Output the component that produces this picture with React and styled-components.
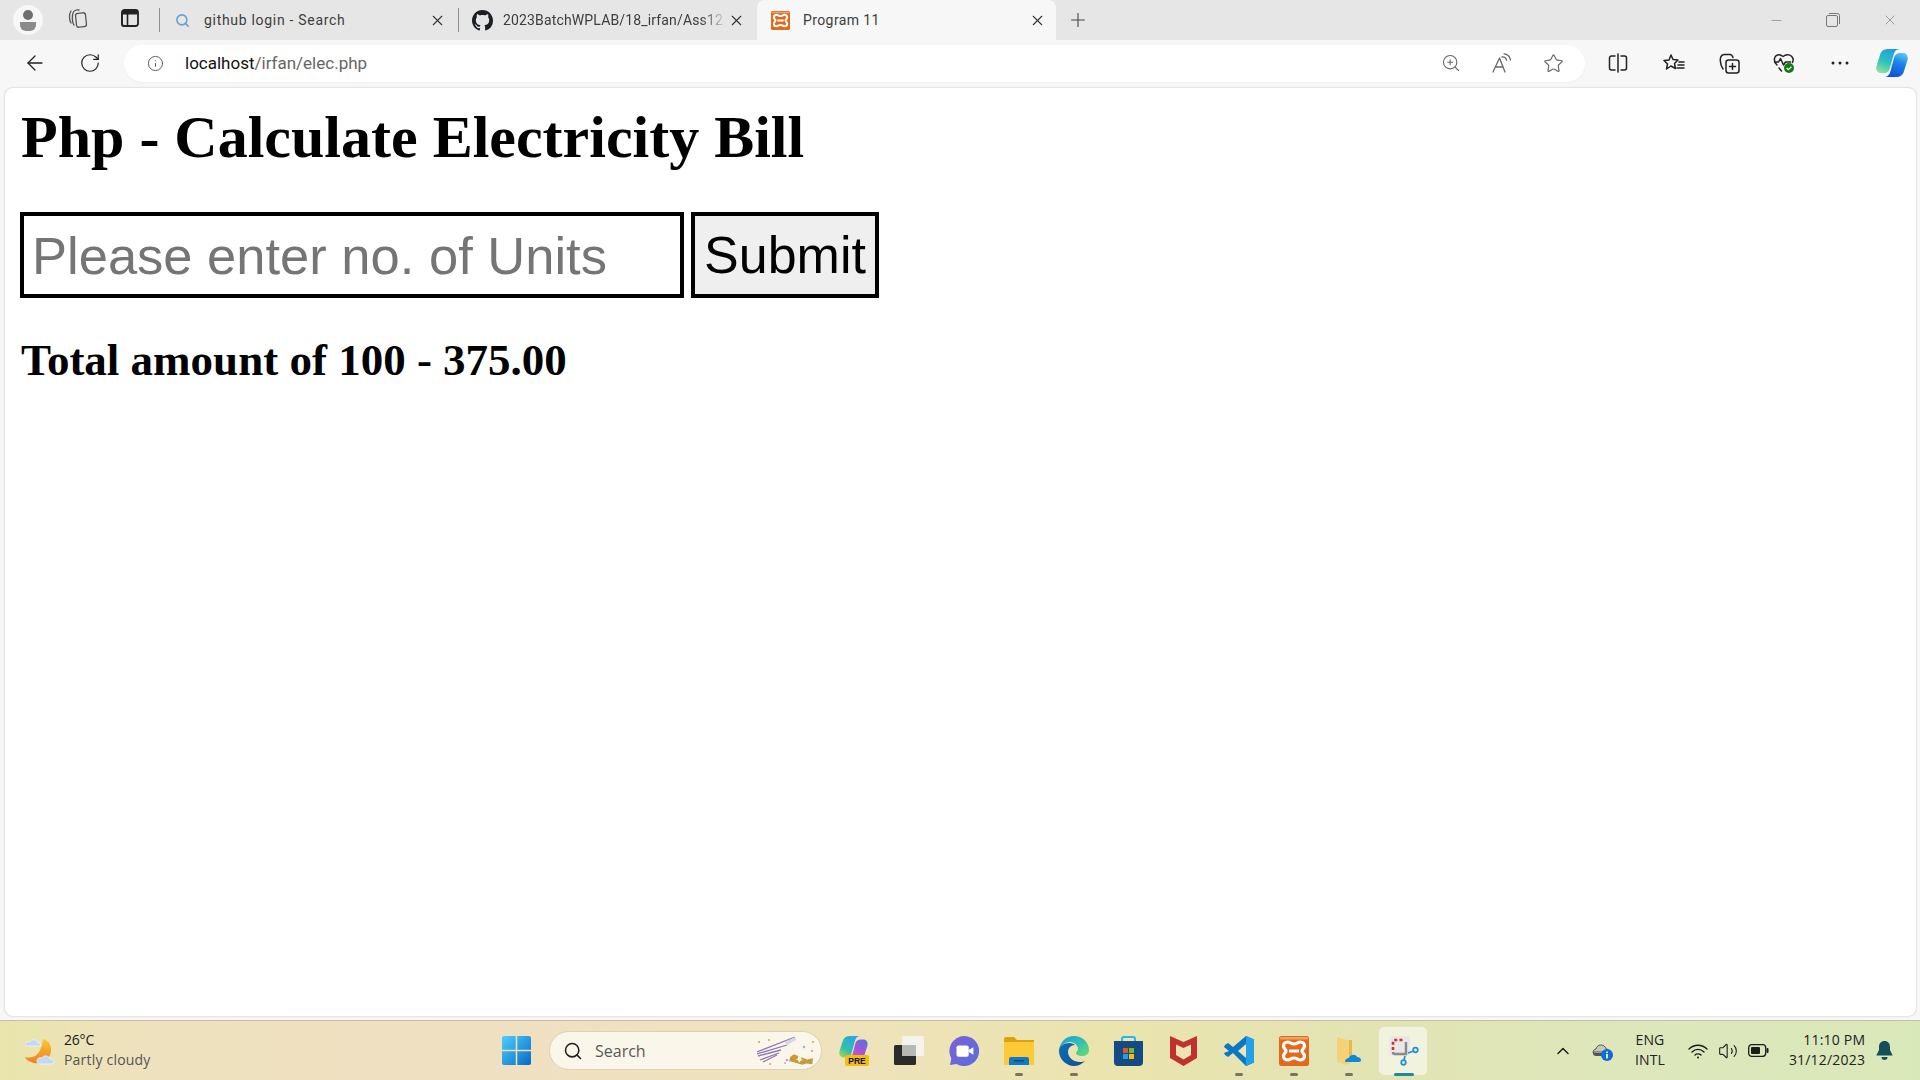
import React from "react";
import styled, { createGlobalStyle } from "styled-components";
import { ArrowLeft, RotateCw, Info, ZoomIn, Star, Plus, X, Minus, Search, ChevronUp, Volume2 } from "lucide-react";

const Global = createGlobalStyle`
  html, body { margin: 0; padding: 0; background: #fff; }
  * { box-sizing: border-box; }
`;
const Shell = styled.div`
  width: 1920px; height: 1080px; display: flex; flex-direction: column; overflow: hidden;
  background: #f7f7f7; font-family: "Open Sans", "Noto Sans", sans-serif; color: #1a1a1a;
`;
const TabStrip = styled.div`
  height: 40px; flex: none; display: flex; align-items: flex-start; background: #e6e6e6; position: relative; z-index: 1;
`;
const StripBtn = styled.div`
  flex: none; height: ${p => p.$h || 36}px; width: ${p => p.$w}px; display: flex; align-items: center; justify-content: center; color: #444;
`;
const Avatar = styled.div`
  width: 30px; height: 30px; border-radius: 50%; background: #f7f7f7; display: flex; align-items: center; justify-content: center;
  margin: 5px 0 0 13px; flex: none;
`;
const Sep = styled.div`
  flex: none; width: 1px; height: 24px; margin: 8px 0 0 ${p => p.$ml || 0}px; background: #8f8f8f;
`;
const Tab = styled.div`
  flex: none; height: ${p => (p.$active ? 44 : 40)}px; width: ${p => p.$w}px; display: flex; align-items: center;
  padding: ${p => (p.$active ? "0 10px 4px 12px" : "0 12px 0 0")}; font-size: 14px; font-family: Roboto, sans-serif; color: #3d3d3d;
  background: ${p => (p.$active ? "#f7f7f7" : "transparent")};
  border-radius: ${p => (p.$active ? "8px 8px 0 0" : "0")};
`;
const TabIcon = styled.div`
  flex: none; width: 22px; height: 22px; display: flex; align-items: center; justify-content: center; margin: 0 ${p => p.$gap}px 0 ${p => p.$left || 0}px;
`;
const TabTitle = styled.div`
  flex: 1; white-space: nowrap; overflow: hidden; letter-spacing: ${p => p.$sp || 0.15}px;
  ${p => p.$fade && "-webkit-mask-image: linear-gradient(90deg,#000 88%,transparent 100%);"}
`;
const WindowControls = styled.div`
  margin-left: auto; display: flex; height: 40px; align-items: center; color: #777; padding-right: 22px; gap: 42px;
`;
const Toolbar = styled.div`
  height: 48px; flex: none; display: flex; align-items: center; background: #f7f7f7; padding-bottom: 2px;
`;
const ToolBtn = styled.div`
  flex: none; width: ${p => p.$w}px; margin-left: ${p => p.$ml || 0}px; height: 40px; display: flex; align-items: center; justify-content: center; color: ${p => p.$c || "#222"};
`;
const Address = styled.div`
  flex: none; width: 1461px; height: 37px; margin-left: 20px; border-radius: 19px; background: #fff; display: flex; align-items: center;
  box-shadow: 0 1px 2px rgba(0,0,0,.04); padding-left: 23px;
`;
const Url = styled.div`
  margin-left: 21px; font: 17px Roboto, sans-serif; color: #111; white-space: nowrap; flex: 1;
  span { color: #666; }
`;
const AddrIcons = styled.div`
  display: flex; align-items: center; color: #666; gap: 31px; padding-right: 21px;
`;
const ToolRight = styled.div`
  display: flex; align-items: center; margin-left: 23px;
`;
const Page = styled.main`
  flex: 1; margin: 0 4px 4px 5px; background: #fff; border-radius: 8px; box-shadow: 0 0 2px rgba(0,0,0,.28);
  padding: 0 16px; color: #000; font-family: "Liberation Serif", serif; overflow: hidden; min-height: 0;
`;
const Title = styled.h1`
  margin: 14.500px 0 0; font-size: 60px; line-height: 69px; font-weight: bold; white-space: nowrap;
`;
const Form = styled.form`
  display: flex; margin: 40.500px 0 0 -1px; gap: 7px; align-items: stretch;
`;
const Units = styled.input`
  width: 664px; height: 86px; border: 4px solid #000; padding: 0 8px; font: 52.500px "Liberation Sans", sans-serif; background: #fff; outline: none;
  &::placeholder { color: #757575; opacity: 1; }
`;
const Submit = styled.button`
  width: 188px; height: 86px; border: 4px solid #000; padding: 0; font: 52px "Liberation Sans", sans-serif; background: #efefef; color: #000;
`;
const Total = styled.h3`
  margin: 36px 0 0; font-size: 45px; line-height: 53px; font-weight: bold; white-space: nowrap;
`;
const Taskbar = styled.footer`
  height: 60px; flex: none; display: flex; align-items: center; position: relative;
  border-top: 1px solid #c6bfa3;
  background: linear-gradient(90deg,#e9e5ab 0%,#eee2bd 6%,#efe0c2 25%,#eee3bb 45%,#ebe4ae 58%,#e2e4b4 72%,#dde7bb 85%,#d9e8b9 100%);
`;
const Weather = styled.div`
  flex: none; width: 489px; display: flex; align-items: center; padding-left: 25px; gap: 9px;
`;
const WeatherText = styled.div`
  font: 14px/20px "Open Sans", sans-serif; letter-spacing: -0.2px; color: #1b1b1b; margin-top: -2px;
  small { display: block; font-size: 14px; color: #555; letter-spacing: 0.2px; }
`;
const Slot = styled.div`
  flex: none; width: ${p => p.$w || 55}px; height: 48px; display: flex; align-items: center; justify-content: center; position: relative;
  ${p => p.$active && "&::before{content:'';position:absolute;left:3px;right:4px;top:0;bottom:0;background:rgba(255,255,255,.55);border-radius:5px;}"}
  svg { position: relative; }
`;
const Running = styled.span`
  position: absolute; bottom: -1px; left: 50%; margin-left: ${p => (p.$active ? -10 : -4)}px; width: ${p => (p.$active ? 20 : 8)}px; height: 3px; border-radius: 2px;
  background: ${p => (p.$active ? "#1f8a9e" : "#77745f")};
`;
const SearchPill = styled.div`
  flex: none; width: 273px; height: 39px; margin: 0 4px 0 5px; border-radius: 20px; background: #faf6ea; border: 1px solid #d9d2b5;
  display: flex; align-items: center; padding: 0 4px 0 13px; color: #555; font-size: 16px; position: relative;
`;
const SearchLabel = styled.span`
  margin-left: 12px; flex: 1; color: #585858; font-family: "Open Sans", sans-serif; font-size: 16px;
`;
const Tray = styled.div`
  flex: none; display: flex; align-items: center; margin-left: 122px; color: #1c1c1c;
`;
const TrayText = styled.div`
  flex: none; font: 14px/20px "Open Sans", sans-serif; letter-spacing: ${p => p.$sp || 0}px; text-align: ${p => p.$align || "center"};
  color: #222; white-space: nowrap; margin: -2px 0 0 ${p => p.$ml || 0}px;
`;
const TrayIcon = styled.div`
  flex: none; width: ${p => p.$w}px; display: flex; align-items: center; justify-content: center; margin-left: ${p => p.$ml || 0}px;
`;

const s = { fill: "none", stroke: "currentColor", strokeWidth: 1.3, strokeLinecap: "round", strokeLinejoin: "round" };
const Xampp = ({ size }) => (
  <svg width={size} height={size} viewBox="0 0 30 30">
    <rect width="30" height="30" rx="2.500" fill="#e2691d" />
    <rect x="1" y="1" width="28" height="2.500" rx="1" fill="#f0a263" />
    <path d="M9 6C11 6 12 8 15 8S19 6 21 6C24 6 25.500 8 25.500 10C25.500 12.500 23 13 23 15S25.500 17.500 25.500 20C25.500 22 24 24 21 24C19 24 18 22 15 22S11 24 9 24C6 24 4.500 22 4.500 20C4.500 17.500 7 17 7 15S4.500 12.500 4.500 10C4.500 8 6 6 9 6Z" fill="none" stroke="#fff" strokeWidth="3.200" />
    <path d="M10 15h10" stroke="#fff" strokeWidth="3" />
  </svg>
);
const GitHub = () => (
  <svg width="21" height="21" viewBox="0 0 16 16"><path fill="#1b1f23" d="M8 0C3.58 0 0 3.58 0 8c0 3.54 2.29 6.53 5.47 7.59.4.07.55-.17.55-.38 0-.19-.01-.82-.01-1.49-2.010.37-2.530-.49-2.690-.94-.09-.23-.48-.94-.82-1.130-.28-.15-.68-.52-.01-.53.63-.01 1.080.58 1.230.82.72 1.210 1.870.87 2.330.66.07-.52.28-.87.51-1.070-1.780-.2-3.640-.89-3.640-3.950 0-.87.31-1.590.82-2.150-.08-.2-.36-1.020.08-2.120 0 0 .67-.21 2.200.82.640-.18 1.320-.27 2-.27s1.360.09 2 .27c1.530-1.040 2.200-.82 2.200-.82.44 1.100.16 1.920.08 2.120.51.56.82 1.270.82 2.150 0 3.070-1.870 3.750-3.650 3.950.29.25.54.73.54 1.480 0 1.070-.01 1.930-.01 2.200 0 .21.15.46.55.38A8.010 8.010 0 0 0 16 8c0-4.420-3.580-8-8-8z" /></svg>
);
const Person = () => (
  <svg width="20" height="24" viewBox="0 0 20 24"><circle cx="10" cy="7" r="5" fill="#6f6f6f" /><path d="M2 14h16v3a6 6 0 0 1-6 6H8a6 6 0 0 1-6-6z" fill="#8a8a8a" /></svg>
);
const Workspaces = () => (
  <svg width="22" height="22" viewBox="0 0 22 22" {...s} stroke="#555"><rect x="9" y="6" width="10" height="14" rx="2.500" transform="rotate(-6 14 13)" /><path d="M7 18C5 16 5 9 6 6c.5-2 3-3.500 6-3" /><path d="M4 16C2 13 2 7 4 4" /></svg>
);
const VTabs = () => (
  <svg width="18" height="18" viewBox="0 0 18 18"><rect x="1" y="1" width="16" height="16" rx="2.500" fill="none" stroke="#222" strokeWidth="1.800" /><rect x="1" y="1" width="16" height="4.500" rx="1.500" fill="#222" /><rect x="1" y="3" width="5.500" height="14" rx="1" fill="none" stroke="#222" strokeWidth="1.600" /></svg>
);
const Restore = () => (
  <svg width="14" height="14" viewBox="0 0 14 14" fill="none" stroke="#777"><rect x=".5" y="2.500" width="11" height="11" rx="1.500" /><path d="M3 .5h8.500A2 2 0 0 1 13.500 2.500V11" /></svg>
);
const ReadAloud = () => (
  <svg width="20" height="20" viewBox="0 0 20 20" {...s}><path d="M1 19 7.500 5 13 19M3.500 14h7.500" /><path d="M10 4c2-.5 4 1 4.500 3M12 .8c3.500 0 6 3 6.500 6" /></svg>
);
const Split = () => (
  <svg width="20" height="20" viewBox="0 0 20 20" {...s} strokeWidth="1.500"><path d="M7 3H3.500A2 2 0 0 0 1.500 5v10a2 2 0 0 0 2 2H7M13 3h3.500a2 2 0 0 1 2 2v10a2 2 0 0 1-2 2H13M10 1v18" /></svg>
);
const Favs = () => (
  <svg width="22" height="20" viewBox="0 0 22 20" {...s} strokeWidth="1.500"><path d="M8 2l2 4.500 5 .5-3.500 3.500 1 5-4.500-2.500L3.500 16l1-5L1 7.500l5-.5z" /><path d="M16 9h5M15 12h6M14 15h7" /></svg>
);
const Collections = () => (
  <svg width="21" height="21" viewBox="0 0 21 21" {...s} strokeWidth="1.500"><rect x="7" y="7" width="13" height="13" rx="2.500" /><path d="M13.500 10.500v6M10.500 13.500h6" /><path d="M4 16C2 13 1 8 1.500 5c.5-2 2-3.500 4-3.500L11 1.500c1.500 0 2.500 1.500 3 3" /></svg>
);
const Health = () => (
  <svg width="22" height="22" viewBox="0 0 22 22"><path {...s} strokeWidth="1.500" d="M4 13C2 11 1 9 1.500 6.500 2 3.500 6 1 10 4.500 14 1 19 3 20 6.500c.3 1.500 0 3-.5 4M1.500 10h4l2-3.500 3 6.500 2-3h5M6 16l2.500 3" /><circle cx="16" cy="16" r="5" fill="#107c10" /><path d="M13.700 16l1.700 1.700 3-3" fill="none" stroke="#fff" strokeWidth="1.300" /></svg>
);
const Dots = () => (
  <svg width="18" height="4" viewBox="0 0 18 4" fill="#222"><circle cx="2" cy="2" r="1.500" /><circle cx="9" cy="2" r="1.500" /><circle cx="16" cy="2" r="1.500" /></svg>
);
const RIBBON = "M12 0H24C20.500 0 18.500 2 17.500 6L14 19C13.500 22 11 24 8 24H5C1.500 24-.5 21 .5 17L4 6C5 2 8 0 12 0Z";
const CopilotMark = () => (
  <svg width="32" height="28" viewBox="0 0 32 28">
    <defs>
      <linearGradient id="cpa" x1="0.6" y1="0" x2="0.2" y2="1"><stop offset="0" stopColor="#1f9fe4" /><stop offset=".55" stopColor="#2fc3bb" /><stop offset="1" stopColor="#8de39a" /></linearGradient>
      <linearGradient id="cpb" x1="0.6" y1="0" x2="0.2" y2="1"><stop offset="0" stopColor="#0f4fd6" /><stop offset=".6" stopColor="#1b86e8" /><stop offset="1" stopColor="#5fc8f4" /></linearGradient>
    </defs>
    <path d={RIBBON} fill="url(#cpa)" />
    <path d={RIBBON} fill="url(#cpb)" transform="rotate(180 16 14)" />
  </svg>
);
const CopilotPre = () => (
  <svg width="30" height="30" viewBox="0 0 30 30">
    <defs>
      <linearGradient id="pa" x1="0.7" y1="0" x2="0" y2="1"><stop offset="0" stopColor="#27a4ea" /><stop offset=".6" stopColor="#33c2a8" /><stop offset="1" stopColor="#b8d84c" /></linearGradient>
      <linearGradient id="pb" x1="1" y1="0" x2="0" y2="1"><stop offset="0" stopColor="#f06aa0" /><stop offset=".5" stopColor="#b050dc" /><stop offset="1" stopColor="#4a78e0" /></linearGradient>
    </defs>
    <g transform="scale(.9)">
      <path d={RIBBON} fill="url(#pa)" />
      <path d={RIBBON} fill="url(#pb)" transform="rotate(180 16 14)" />
    </g>
    <rect x="6" y="19" width="24" height="11" rx="2" fill="#f5bd0f" />
    <text x="18" y="28" fontSize="8.500" fontWeight="800" fontFamily="Liberation Sans, sans-serif" textAnchor="middle" fill="#111">PRE</text>
  </svg>
);
const WeatherIcon = () => (
  <svg width="30" height="29" viewBox="0 0 30 29">
    <defs><linearGradient id="moon" x1="0" y1="0" x2="0" y2="1"><stop offset="0" stopColor="#f9c93c" /><stop offset="1" stopColor="#ee7f18" /></linearGradient></defs>
    <path d="M18 3c7 2 10 9 7 16-3 8-13 10-19 7-3-1-5-3-6-5 8 2 16-1 18-18z" fill="url(#moon)" />
    <path d="M0 9c0-3 3-4 5-3 1-3 7-3 8 1 2 0 3 1 3 3H2C1 10 0 10 0 9z" fill="#c2d8f5" stroke="#eef4fc" strokeWidth=".8" />
    <path d="M12 25c0-3 3-4 5-3 1-3 7-3 8 1 3 0 4 1 4 3 0 1-1 2-3 2H15c-2 0-3-1-3-3z" fill="#c2d8f5" stroke="#eef4fc" strokeWidth=".8" />
  </svg>
);
const WinLogo = () => (
  <svg width="29" height="29" viewBox="0 0 29 29">
    <defs><linearGradient id="win" x1="0" y1="0" x2="1" y2="1"><stop offset="0" stopColor="#4fd0fb" /><stop offset="1" stopColor="#0669c6" /></linearGradient></defs>
    <path d="M2 0h11.700v13.700H0V2a2 2 0 0 1 2-2zM15.300 0H27a2 2 0 0 1 2 2v11.700H15.300zM0 15.300h13.700V29H2a2 2 0 0 1-2-2zM15.300 15.300H29V27a2 2 0 0 1-2 2H15.300z" fill="url(#win)" />
  </svg>
);
const Cracker = () => (
  <svg width="60" height="30" viewBox="0 0 60 30">
    <path d="M0 16 38 1M0 18 30 9M1 20 24 14M3 24 22 17M6 26 20 19" stroke="#8d7ab8" strokeWidth="1.300" fill="none" />
    <path d="M28 6 38 1l1 3-9 5z" fill="#d9d3e6" />
    <path d="M33 21l4-3 13 6 6-1-1 6-6-1-4 1-12-4-1 1z" fill="#c89a3e" transform="rotate(-3 40 22)" />
    <path d="M41 19l2 2 2-1-1 3 2 1-3 1-1 2-1-3-2 0 2-2z" fill="#fff6dd" />
    <g fill="#b9a5d8"><circle cx="30" cy="24" r="1.300" /><circle cx="28" cy="27" r="1" /><circle cx="47" cy="11" r="1.300" /></g>
    <g fill="#d8a945"><circle cx="2" cy="6" r="1.100" /><circle cx="12" cy="4" r="1.100" /><circle cx="56" cy="6" r="1.100" /><circle cx="55" cy="15" r="1.100" /><circle cx="13" cy="28" r="1.100" /></g>
  </svg>
);
const TaskView = () => (
  <svg width="30" height="30" viewBox="0 0 30 30">
    <rect x="0" y="9" width="22" height="20" rx="1.500" fill="#2b2b2b" />
    <rect x="8" y="0" width="22" height="20" rx="1.500" fill="#f4f4f0" opacity=".92" />
    <rect x="8" y="9" width="14" height="11" fill="#b9b9b4" />
  </svg>
);
const Chat = () => (
  <svg width="30" height="32" viewBox="0 0 32 32">
    <defs><linearGradient id="chat" x1="0" y1="0" x2="1" y2="1"><stop offset="0" stopColor="#7b5fd8" /><stop offset="1" stopColor="#5b6fd8" /></linearGradient></defs>
    <path d="M16 0a16 16 0 1 1-8 29.800L1 31l1.500-7A16 16 0 0 1 16 0z" fill="url(#chat)" />
    <rect x="8" y="10" width="13" height="12" rx="2" fill="#fff" /><path d="M21 15l5-3v8l-5-3z" fill="#fff" />
  </svg>
);
const Folder = () => (
  <svg width="30" height="28" viewBox="0 0 30 28">
    <path d="M0 2a2 2 0 0 1 2-2h8l3 3h17v5H0z" fill="#dfa10e" />
    <path d="M0 5h30v23H0z" fill="#fcc937" />
    <path d="M5 28v-6a2 2 0 0 1 2-2h16a2 2 0 0 1 2 2v6z" fill="#0f78c9" />
    <rect x="10" y="23" width="10" height="1.400" fill="#07456f" />
  </svg>
);
const Edge = () => (
  <svg width="30" height="30" viewBox="0 0 30 30">
    <defs>
      <linearGradient id="e1" x1="0" y1="0" x2="1" y2="1"><stop offset="0" stopColor="#1b9de2" /><stop offset=".55" stopColor="#35c1b0" /><stop offset="1" stopColor="#6be06a" /></linearGradient>
      <linearGradient id="e2" x1="0" y1="0" x2="1" y2="1"><stop offset="0" stopColor="#0d6fb8" /><stop offset="1" stopColor="#124e94" /></linearGradient>
    </defs>
    <path d="M15 0c8 0 15 6 15 14 0 4-3 6-7 6-3 0-6-1-6-3 0-1 2-2 2-4 0-4-4-7-8-7-5 0-9 3-11 8C1 6 7 0 15 0z" fill="url(#e1)" />
    <path d="M0 15c0-5 5-8 10-8 3 0 5 1 6 2-4 0-7 3-7 7 0 6 6 10 12 10 2 0 4-.5 5-1-3 3-7 5-11 5C7 30 0 23 0 15z" fill="url(#e2)" />
  </svg>
);
const Store = () => (
  <svg width="29" height="30" viewBox="0 0 29 30">
    <path d="M8 6V3a2 2 0 0 1 2-2h9a2 2 0 0 1 2 2v3" fill="none" stroke="#27b4ef" strokeWidth="2" />
    <path d="M0 5h29v21a4 4 0 0 1-4 4H4a4 4 0 0 1-4-4z" fill="#164a82" />
    <rect x="9" y="12" width="5" height="5" fill="#e8502a" /><rect x="15" y="12" width="5" height="5" fill="#7fb81f" />
    <rect x="9" y="18" width="5" height="5" fill="#18a3e8" /><rect x="15" y="18" width="5" height="5" fill="#fdb813" />
  </svg>
);
const McAfee = () => (
  <svg width="27" height="30" viewBox="0 0 27 30">
    <path d="M0 0l13.500 6L27 0v22l-13.500 8L0 22z" fill="#c1322f" />
    <path d="M6 8.500l7.500 3.500L21 8.500V19l-7.500 4.500L6 19z" fill="#efe3b4" />
  </svg>
);
const VSCode = () => (
  <svg width="30" height="30" viewBox="0 0 30 30">
    <path d="M22 0l8 3.500v23L22 30 9 17l-5 4-3-2-1-2 5-2-5-4 1-2 3-2 5 4z" fill="#0a78c3" />
    <path d="M22 0l8 3.500v23L22 30z" fill="#22a0ea" />
    <path d="M22 8l-8 7 8 7z" fill="#efe4b2" />
  </svg>
);
const OneDriveFolder = () => (
  <svg width="24" height="28" viewBox="0 0 24 28">
    <path d="M0 0l10 3h5v22l-5 3-10-3z" fill="#f5d27a" /><path d="M12 3h3v22h-3z" fill="#e8b94a" />
    <path d="M8 25c0-3 2-4 4-4 1-4 7-4 8-1 3 0 4 2 4 3s-1 2-2 2z" fill="#0f86d8" />
  </svg>
);
const Snip = () => (
  <svg width="30" height="30" viewBox="0 0 30 30">
    <rect width="21" height="20" rx="3" fill="#e8e8ea" />
    <path d="M4 14V5.500A1.500 1.500 0 0 1 5.500 4H15" fill="none" stroke="#d8321f" strokeWidth="2.600" strokeDasharray="3 2.200" />
    <path d="M4 16c0 1 1 2 2 2h11V6" fill="none" stroke="#8a8a8a" strokeWidth="2.400" />
    <circle cx="26.500" cy="14" r="2.300" fill="none" stroke="#1f8fd8" strokeWidth="1.700" />
    <circle cx="14.500" cy="26.500" r="2.300" fill="none" stroke="#1f8fd8" strokeWidth="1.700" />
    <path d="M19 17l5.500-2M16 20l-1 4" stroke="#1f8fd8" strokeWidth="1.700" />
  </svg>
);
const CloudInfo = () => (
  <svg width="21" height="20" viewBox="0 0 21 20">
    <path d="M1 12c0-3 2-4 3-4 1-4 5-5 8-3 1 .5 2 2 2 3 2 0 3 1 3 3H2z" fill="#c8c8c0" stroke="#333" strokeWidth=".8" />
    <path d="M1 12c0 2 1 3 3 3h6v-3H1z" fill="#555" />
    <circle cx="15" cy="14" r="6" fill="#0f6cce" /><rect x="14.200" y="13" width="1.600" height="4.500" fill="#fff" /><rect x="14.200" y="10.500" width="1.600" height="1.600" fill="#fff" />
  </svg>
);
const WifiIcon = () => (
  <svg width="20" height="16" viewBox="0 0 20 16" {...s} strokeWidth="1.400"><path d="M1 6c5-5 13-5 18 0M4 9c3.500-3.500 8.500-3.500 12 0M7 12c1.500-1.500 4.500-1.500 6 0" /><circle cx="10" cy="14.500" r="1" fill="currentColor" stroke="none" /></svg>
);
const BatteryIcon = () => (
  <svg width="21" height="13" viewBox="0 0 21 13"><rect x=".7" y=".7" width="17" height="11.600" rx="3" fill="none" stroke="#1c1c1c" strokeWidth="1.300" /><rect x="3" y="3" width="9" height="7" rx="1" fill="#1c1c1c" /><rect x="18.500" y="4" width="2" height="5" rx="1" fill="#1c1c1c" /></svg>
);
const BellIcon = () => (
  <svg width="17" height="19" viewBox="0 0 17 19"><path d="M8.500 0C5 0 3 2.500 3 6v3L.3 14.500h16.400L14 9V6c0-3.500-2-6-5.500-6z" fill="#134f5c" /><path d="M5.500 16a3 3 0 0 0 6 0z" fill="#134f5c" /></svg>
);

export default function App() {
  return (
    <Shell>
      <Global />
      <TabStrip>
        <Avatar><Person /></Avatar>
        <StripBtn $w={70}><Workspaces /></StripBtn>
        <StripBtn $w={34}><VTabs /></StripBtn>
        <Sep $ml={12} />
        <Tab $w={298}>
          <TabIcon $gap={11} $left={11}><Search size={15} color="#6b9fcf" strokeWidth={2.500} /></TabIcon>
          <TabTitle $sp={0.7}>github login - Search</TabTitle>
          <X size={17} strokeWidth={1.500} color="#333" />
        </Tab>
        <Sep />
        <Tab $w={298}>
          <TabIcon $gap={10} $left={12}><GitHub /></TabIcon>
          <TabTitle $fade>2023BatchWPLAB/18_irfan/Ass12</TabTitle>
          <X size={17} strokeWidth={1.500} color="#333" />
        </Tab>
        <Tab $active $w={299}>
          <TabIcon $gap={12}><Xampp size={19} /></TabIcon>
          <TabTitle $sp={0.4}>Program 11</TabTitle>
          <X size={17} strokeWidth={1.500} color="#333" />
        </Tab>
        <StripBtn $w={44} $h={40}><Plus size={22} strokeWidth={1.200} color="#444" /></StripBtn>
        <WindowControls>
          <Minus size={15} strokeWidth={1} />
          <Restore />
          <X size={16} strokeWidth={1} />
        </WindowControls>
      </TabStrip>
      <Toolbar>
        <ToolBtn $w={28} $ml={21}><ArrowLeft size={24} strokeWidth={1.300} /></ToolBtn>
        <ToolBtn $w={28} $ml={27}><RotateCw size={22} strokeWidth={1.300} /></ToolBtn>
        <Address>
          <Info size={17} strokeWidth={1.200} color="#444" />
          <Url>localhost<span>/irfan/elec.php</span></Url>
          <AddrIcons>
            <ZoomIn size={20} strokeWidth={1.300} />
            <ReadAloud />
            <Star size={21} strokeWidth={1.300} />
          </AddrIcons>
        </Address>
        <ToolRight>
          <ToolBtn $w={20}><Split /></ToolBtn>
          <ToolBtn $w={22} $ml={35}><Favs /></ToolBtn>
          <ToolBtn $w={22} $ml={33}><Collections /></ToolBtn>
          <ToolBtn $w={22} $ml={33}><Health /></ToolBtn>
          <ToolBtn $w={18} $ml={36}><Dots /></ToolBtn>
          <ToolBtn $w={32} $ml={27}><CopilotMark /></ToolBtn>
        </ToolRight>
      </Toolbar>
      <Page>
        <Title>Php - Calculate Electricity Bill</Title>
        <Form onSubmit={e => e.preventDefault()}>
          <Units placeholder="Please enter no. of Units" />
          <Submit type="submit">Submit</Submit>
        </Form>
        <Total>Total amount of 100 - 375.00</Total>
      </Page>
      <Taskbar>
        <Weather>
          <WeatherIcon />
          <WeatherText>26°C<small>Partly cloudy</small></WeatherText>
        </Weather>
        <Slot><WinLogo /></Slot>
        <SearchPill>
          <Search size={20} strokeWidth={1.900} color="#222" />
          <SearchLabel>Search</SearchLabel>
          <Cracker />
        </SearchPill>
        <Slot><CopilotPre /></Slot>
        <Slot><TaskView /></Slot>
        <Slot><Chat /></Slot>
        <Slot><Folder /><Running /></Slot>
        <Slot><Edge /><Running /></Slot>
        <Slot><Store /></Slot>
        <Slot><McAfee /></Slot>
        <Slot><VSCode /><Running /></Slot>
        <Slot><Xampp size={30} /><Running /></Slot>
        <Slot><OneDriveFolder /><Running /></Slot>
        <Slot $active><Snip /><Running $active /></Slot>
        <Tray>
          <ChevronUp size={20} strokeWidth={1.700} />
          <TrayIcon $w={21} $ml={19}><CloudInfo /></TrayIcon>
          <TrayText $ml={22} $sp={0.1}>ENG<br />INTL</TrayText>
          <TrayIcon $w={20} $ml={23}><WifiIcon /></TrayIcon>
          <TrayIcon $w={20} $ml={10}><Volume2 size={20} strokeWidth={1.300} /></TrayIcon>
          <TrayIcon $w={21} $ml={10}><BatteryIcon /></TrayIcon>
          <TrayText $align="right" $ml={20} $sp={0.2}>11:10 PM<br />31/12/2023</TrayText>
          <TrayIcon $w={17} $ml={11}><BellIcon /></TrayIcon>
        </Tray>
      </Taskbar>
    </Shell>
  );
}
